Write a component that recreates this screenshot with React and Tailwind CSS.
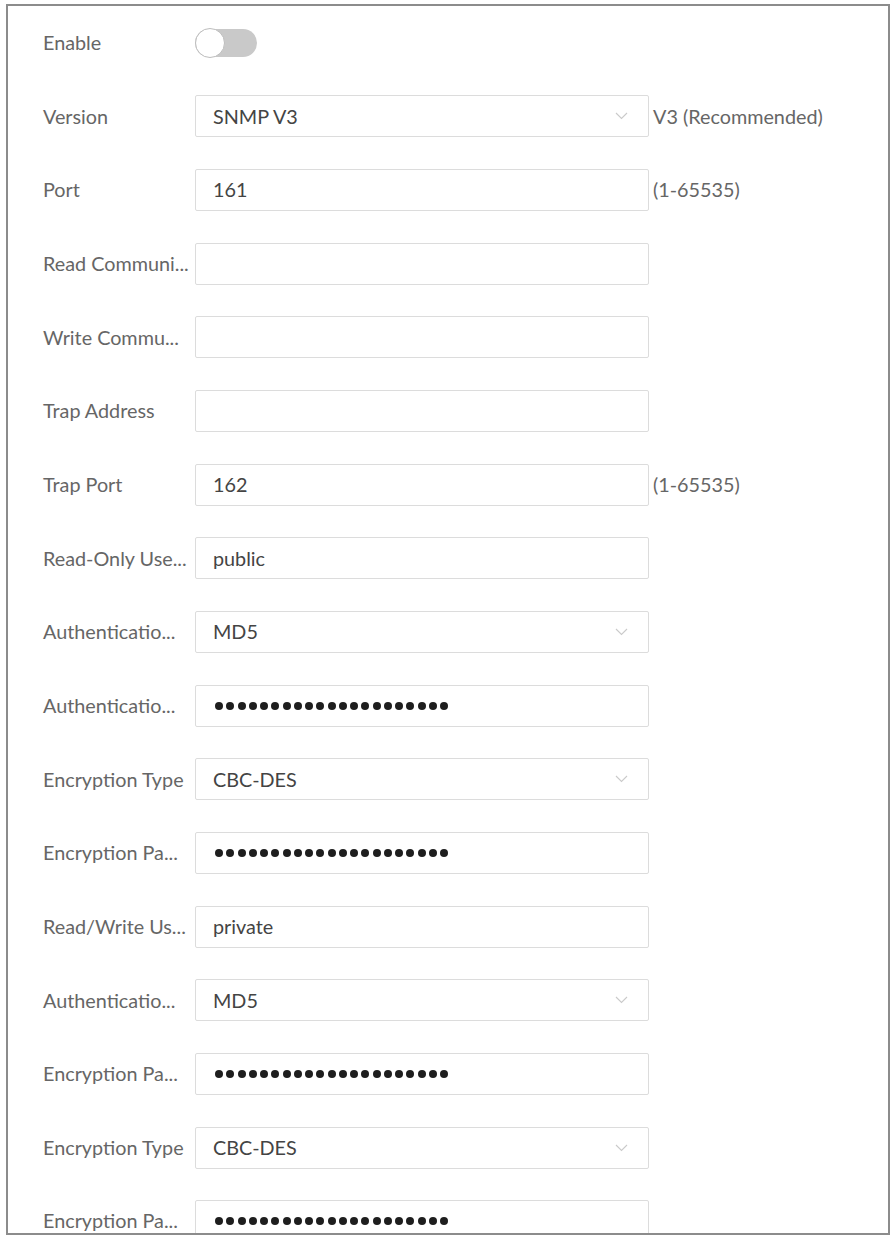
import React from "react";

const rows = [
  { label: "Version", type: "select", value: "SNMP V3", suffix: "V3 (Recommended)" },
  { label: "Port", type: "text", value: "161", suffix: "(1-65535)" },
  { label: "Read Communi...", type: "text", value: "" },
  { label: "Write Commu...", type: "text", value: "" },
  { label: "Trap Address", type: "text", value: "" },
  { label: "Trap Port", type: "text", value: "162", suffix: "(1-65535)" },
  { label: "Read-Only Use...", type: "text", value: "public" },
  { label: "Authenticatio...", type: "select", value: "MD5" },
  { label: "Authenticatio...", type: "password" },
  { label: "Encryption Type", type: "select", value: "CBC-DES" },
  { label: "Encryption Pa...", type: "password" },
  { label: "Read/Write Us...", type: "text", value: "private" },
  { label: "Authenticatio...", type: "select", value: "MD5" },
  { label: "Encryption Pa...", type: "password" },
  { label: "Encryption Type", type: "select", value: "CBC-DES" },
  { label: "Encryption Pa...", type: "password" },
];

function Dots() {
  return (
    <div className="flex gap-[3.25px] pl-[2px]">
      {Array.from({ length: 21 }).map((_, i) => (
        <div key={i} className="w-[8px] h-[8px] rounded-full bg-[#1e1e1e]" />
      ))}
    </div>
  );
}

function Chevron() {
  return (
    <svg width="13" height="8" viewBox="0 0 13 8" className="absolute right-[20px] top-1/2 -translate-y-1/2">
      <path d="M1 1 L6.5 6.5 L12 1" fill="none" stroke="#cacaca" strokeWidth="1.1" />
    </svg>
  );
}

function Field({ row }) {
  return (
    <div className="relative w-[454px] h-[42px] border border-[#dcdcdc] rounded-[2px] bg-white flex items-center pl-[17px] text-[#444]">
      {row.type === "password" ? <Dots /> : <span>{row.value}</span>}
      {row.type === "select" && <Chevron />}
    </div>
  );
}

export default function App() {
  return (
    <div className="w-[892px] h-[1237px] bg-white pt-[4px]" style={{ fontFamily: "Lato, 'Noto Sans', sans-serif" }}>
      <div className="ml-[6px] w-[884px] h-[1231px] border-2 border-[#8c8c8c] overflow-hidden text-[19.8px]">
        <div className="h-[73.67px] flex items-center pl-[35px]">
          <div className="w-[152px] text-[#666]">Enable</div>
          <div className="relative w-[62px] h-[28px] rounded-full bg-[#c9c9c9]">
            <div className="absolute left-0 top-[-1px] w-[30px] h-[30px] rounded-full bg-white border border-[#bdbdbd]" />
          </div>
        </div>
        {rows.map((row, i) => (
          <div key={i} className="h-[73.67px] flex items-center pl-[35px] shrink-0">
            <div className="w-[152px] text-[#666] whitespace-nowrap">{row.label}</div>
            <Field row={row} />
            {row.suffix && <div className="ml-[4px] text-[#666] whitespace-nowrap">{row.suffix}</div>}
          </div>
        ))}
      </div>
    </div>
  );
}
